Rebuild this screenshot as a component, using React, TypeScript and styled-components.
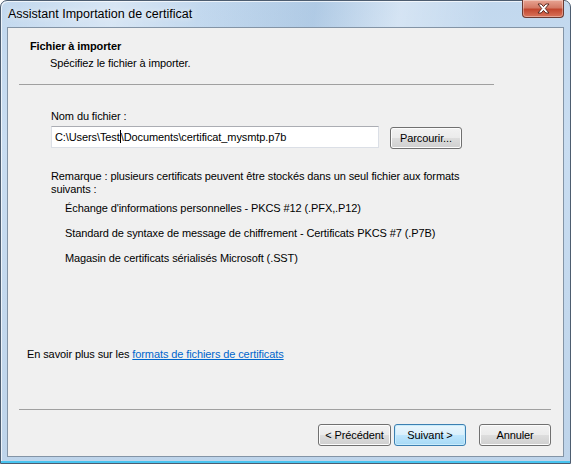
import React from 'react';
import styled, { createGlobalStyle } from 'styled-components';

const GlobalStyle = createGlobalStyle`
  body {
    margin: 0;
    background: #ffffff;
    font-family: "Liberation Sans", Arial, sans-serif;
  }
`

function App() {
  return (
    <>
      <GlobalStyle />
      <Window>
        <TitleBar>
          <Caption>Assistant Importation de certificat</Caption>
          <CloseButton>
            <svg width="17" height="11" viewBox="0 0 17 11">
              <path d="M3 1h3.2l2.3 2.6L10.8 1H14l-3.7 4.5L14 10h-3.2L8.5 7.4 6.2 10H3l3.7-4.5z" fill="#ffffff" stroke="#5a2a22" strokeWidth="1" strokeLinejoin="round" />
            </svg>
          </CloseButton>
        </TitleBar>
        <Client>
          <Header>
            <HeaderTitle>Fichier à importer</HeaderTitle>
            <HeaderSub>Spécifiez le fichier à importer.</HeaderSub>
          </Header>
          <Rule $left={11} $width={475} $top={13} />
          <Body>
            <Label>Nom du fichier :</Label>
            <InputRow>
              <TextBox>
                C:\Users\Test<Caret />\Documents\certificat_mysmtp.p7b
              </TextBox>
              <Button $width={72}>Parcourir...</Button>
            </InputRow>
            <Note>
              Remarque : plusieurs certificats peuvent être stockés dans un seul fichier aux formats suivants :
            </Note>
            <FormatList>
              <FormatItem>Échange d'informations personnelles - PKCS #12 (.PFX,.P12)</FormatItem>
              <FormatItem>Standard de syntaxe de message de chiffrement - Certificats PKCS #7 (.P7B)</FormatItem>
              <FormatItem>Magasin de certificats sérialisés Microsoft (.SST)</FormatItem>
            </FormatList>
          </Body>
          <MoreInfo>
            En savoir plus sur les <Link href="#">formats de fichiers de certificats</Link>
          </MoreInfo>
          <Rule $left={11} $width={532} $top={47} />
          <ButtonBar>
            <Button $width={73}>&lt; Précédent</Button>
            <Button $width={72} $default>Suivant &gt;</Button>
            <Button $width={72} $gap={13}>Annuler</Button>
          </ButtonBar>
        </Client>
      </Window>
    </>
  );
}

const Window = styled.div`
  width: 571px;
  height: 464px;
  box-sizing: border-box;
  display: flex;
  flex-direction: column;
  padding: 0 6px 6px;
  border: 1px solid #4d5d70;
  border-radius: 7px 7px 0 0;
  background:
    linear-gradient(100deg, transparent 0%, rgba(255,255,255,0.35) 20%, transparent 35%, rgba(120,160,200,0.25) 55%, rgba(255,255,255,0.3) 70%, transparent 85%) top / 100% 26px no-repeat,
    linear-gradient(#c2d8ee, #c9ddf1 30%, #bed4ea);
  box-shadow: inset 0 -2px 0 #48c4f0, inset 1px 1px 0 rgba(255,255,255,0.7);
`

const TitleBar = styled.div`
  height: 26px;
  flex: none;
  display: flex;
  justify-content: space-between;
  align-items: flex-start;
`

const Caption = styled.div`
  padding: 5px 0 0 1px;
  font-size: 12.5px;
  line-height: 16px;
  color: #000000;
  text-shadow: 0 0 6px rgba(255,255,255,0.9);
`

const CloseButton = styled.div`
  width: 42px;
  height: 18px;
  margin-top: -1px;
  box-sizing: border-box;
  border: 1px solid #6b3a32;
  border-top: none;
  border-radius: 0 0 4px 4px;
  display: flex;
  align-items: center;
  justify-content: center;
  background: linear-gradient(#e8a493, #d47a66 45%, #c2472f 55%, #d9735a);
  box-shadow: inset 0 0 0 1px rgba(255,255,255,0.35);
`

const Client = styled.div`
  flex: 1;
  display: flex;
  flex-direction: column;
  background: #f0f0f0;
  border: 1px solid #8394a6;
  font-size: 11px;
  line-height: 15px;
  letter-spacing: -0.1px;
  color: #000000;
`

const Header = styled.div`
  padding: 11px 0 0 22px;
`

const HeaderTitle = styled.div`
  font-weight: bold;
`

const HeaderSub = styled.div`
  margin: 2px 0 0 20px;
`

const Rule = styled.div<{ $left: number; $width: number; $top: number }>`
  height: 1px;
  background: #a0a0a0;
  margin-left: ${p => p.$left}px;
  margin-top: ${p => p.$top}px;
  width: ${p => p.$width}px;
`

const Body = styled.div`
  flex: 1;
  padding: 24px 0 0 43px;
`

const Label = styled.div``

const InputRow = styled.div`
  display: flex;
  align-items: flex-start;
  margin-top: 2px;
`

const TextBox = styled.div`
  width: 328px;
  height: 22px;
  box-sizing: border-box;
  padding: 3px 0 0 3px;
  background: #ffffff;
  border: 1px solid #dbdfe6;
  border-top-color: #abadb3;
  white-space: nowrap;
`

const Caret = styled.span`
  display: inline-block;
  width: 1px;
  height: 13px;
  margin: 0 0 -2px;
  background: #000000;
`

const Button = styled.div<{ $width: number; $default?: boolean; $gap?: number }>`
  width: ${p => p.$width}px;
  height: 22px;
  box-sizing: border-box;
  margin-left: ${p => p.$gap ?? 3}px;
  display: flex;
  align-items: center;
  justify-content: center;
  border: 1px solid ${p => (p.$default ? '#3c7fb1' : '#707070')};
  border-radius: 3px;
  background: ${p => p.$default
    ? 'linear-gradient(#eaf6fd, #d9f0fc 50%, #bee6fd 51%, #a7d9f5)'
    : 'linear-gradient(#f2f2f2, #ebebeb 50%, #dddddd 51%, #cfcfcf)'};
  box-shadow: inset 0 0 0 1px ${p => (p.$default ? '#c8ecfc' : '#fcfcfc')};
  ${InputRow} & {
    margin: 1px 0 0 11px;
  }
`

const Note = styled.div`
  margin-top: 21px;
  width: 440px;
  line-height: 13px;
`

const FormatList = styled.div`
  margin: 5px 0 0 14px;
  display: flex;
  flex-direction: column;
  gap: 10px;
`

const FormatItem = styled.div``

const MoreInfo = styled.div`
  padding-left: 19px;
`

const Link = styled.a`
  color: #0066cc;
  text-decoration: underline;
`

const ButtonBar = styled.div`
  display: flex;
  justify-content: flex-end;
  padding: 14px 12px 10px 0;
`

export default App;
